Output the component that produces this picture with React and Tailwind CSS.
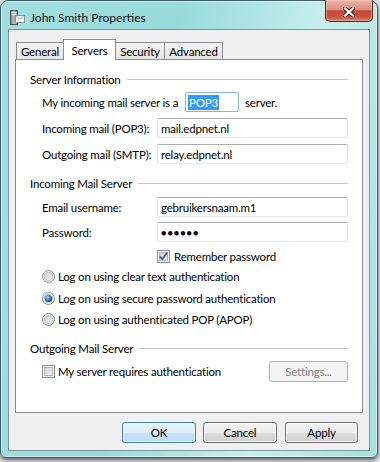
import React from "react";

const FONT = "font-['Segoe_UI','Lato','Liberation_Sans',sans-serif]";

function TitleIcon() {
  return (
    <svg width="16" height="17" viewBox="0 0 16 17">
      <defs>
        <linearGradient id="tw" x1="0" y1="0" x2="1" y2="0">
          <stop offset="0" stopColor="#7d868b" />
          <stop offset="0.5" stopColor="#b9c0c4" />
          <stop offset="1" stopColor="#6f787c" />
        </linearGradient>
      </defs>
      <rect x="1.5" y="1.5" width="7" height="14" fill="url(#tw)" stroke="#4f585c" />
      <rect x="2.5" y="3" width="5" height="1" fill="#e8eced" />
      <rect x="2.5" y="5" width="5" height="1" fill="#e8eced" />
      <rect x="6.5" y="6.5" width="9" height="7" fill="#fbfbfb" stroke="#8a9295" />
      <path d="M6.5 6.5 L11 10.2 L15.5 6.5" fill="none" stroke="#a0a7aa" />
    </svg>
  );
}

function CloseX() {
  return (
    <svg width="12" height="10" viewBox="0 0 12 10">
      <path d="M2 1.5 L10 8.5 M10 1.5 L2 8.5" stroke="#3a1a16" strokeWidth="4.2" strokeLinecap="square" />
      <path d="M2 1.5 L10 8.5 M10 1.5 L2 8.5" stroke="#ffffff" strokeWidth="2.2" strokeLinecap="square" />
    </svg>
  );
}

function Checkbox({ checked }) {
  return (
    <svg width="13" height="13" viewBox="0 0 13 13" className="shrink-0">
      <defs>
        <linearGradient id="cbg" x1="0" y1="0" x2="1" y2="1">
          <stop offset="0" stopColor="#c9cdd2" />
          <stop offset="1" stopColor="#f7f7f7" />
        </linearGradient>
      </defs>
      <rect x="0.5" y="0.5" width="12" height="12" fill="#f4f4f4" stroke="#8e8f8f" />
      <rect x="2.5" y="2.5" width="8" height="8" fill="url(#cbg)" stroke="#b1b5ba" />
      {checked && (
        <path d="M2.8 6.3 L5.2 9.2 L10.3 2.6" stroke="#3f5489" strokeWidth="1.7" fill="none" />
      )}
    </svg>
  );
}

function Radio({ checked }) {
  return (
    <svg width="13" height="13" viewBox="0 0 13 13" className="shrink-0">
      <defs>
        <linearGradient id="rgg" x1="0" y1="0" x2="1" y2="1">
          <stop offset="0" stopColor="#c6cacf" />
          <stop offset="1" stopColor="#f8f8f8" />
        </linearGradient>
        <radialGradient id="rbb" cx="0.4" cy="0.35" r="0.7">
          <stop offset="0" stopColor="#b3e2fb" />
          <stop offset="0.45" stopColor="#3a8ad0" />
          <stop offset="1" stopColor="#0f3f78" />
        </radialGradient>
      </defs>
      <circle cx="6.5" cy="6.5" r="6" fill="#f4f4f4" stroke="#8e8f8f" />
      <circle cx="6.5" cy="6.5" r="4.2" fill="url(#rgg)" stroke="#b4b8bc" strokeWidth="0.8" />
      {checked && <circle cx="6.5" cy="6.5" r="3.6" fill="url(#rbb)" />}
    </svg>
  );
}

function Field({ children }) {
  return (
    <div className="shrink-0 w-[191px] h-[20px] border border-[#abadb3] border-l-[#e2e3ea] border-r-[#dbdfe6] border-b-[#e3e9ef] rounded-[2px] bg-white flex items-center px-[3px] leading-[15px] whitespace-nowrap">
      {children}
    </div>
  );
}

function Header({ children, className }) {
  return (
    <div className={"h-[16px] flex items-center gap-[6px] " + className}>
      <span className="leading-[15px] whitespace-nowrap">{children}</span>
      <div className="flex-1 h-px bg-[#c2c6c9]" />
    </div>
  );
}

function LabeledField({ label, children, className }) {
  return (
    <div className={"h-[20px] flex items-center pl-[12px] " + className}>
      <span className="shrink-0 w-[115px] leading-[15px] whitespace-nowrap">{label}</span>
      <Field>{children}</Field>
    </div>
  );
}

function RadioRow({ checked, children, className }) {
  return (
    <div className={"h-[15px] flex items-center gap-[3px] pl-[12px] " + className}>
      <Radio checked={checked} />
      <span className="leading-[15px] whitespace-nowrap">{children}</span>
    </div>
  );
}

export default function App() {
  return (
    <div className={"w-[380px] h-[462px] bg-[#dfe6e8] text-[11.5px] tracking-[-0.2px] text-black " + FONT}>
      <div className="w-[378px] h-[458px] rounded-t-[8px] rounded-b-[6px] border border-[#3e5a63] bg-[linear-gradient(100deg,#a2dedf_0%,#98dadb_40%,#c6efee_72%,#a4dfe0_100%)] shadow-[inset_0_0_0_1px_rgba(255,255,255,0.5),0_2px_4px_rgba(0,0,0,0.6)] flex flex-col px-[7px] pb-[6px]">
        <div className="h-[29px] flex items-start">
          <div className="mt-[8px] ml-[1px]">
            <TitleIcon />
          </div>
          <span className="ml-[5px] mt-[9px] text-[12px] tracking-normal leading-[15px] text-[#111] whitespace-nowrap">John Smith Properties</span>
          <div className="ml-auto -mt-px mr-[-3px] w-[48px] h-[22px] rounded-b-[5px] border border-[#5a231b] border-t-0 bg-[linear-gradient(to_bottom,#eab4a8_0%,#dd907f_45%,#c64a33_52%,#c8513a_78%,#dc7d62_100%)] shadow-[inset_0_0_0_1px_rgba(255,210,200,0.45)] flex items-center justify-center pt-[2px]">
            <CloseX />
          </div>
        </div>

        <div className="flex-1 bg-[#f0f0f0] border border-[#7a979f] flex flex-col px-[6px] pt-[9px]">
          <div className="flex items-end pl-px">
            <div className="w-[48px] h-[17px] border border-b-0 border-[#898c95] bg-[linear-gradient(#f4f4f4,#e4e4e4)] flex items-center justify-center leading-[15px]">
              General
            </div>
            <div className="relative z-10 -ml-px -mb-px w-[53px] h-[21px] border border-b-0 border-[#898c95] bg-white flex items-center justify-center leading-[15px]">
              Servers
            </div>
            <div className="-ml-px w-[50px] h-[17px] border border-b-0 border-[#898c95] bg-[linear-gradient(#f4f4f4,#e4e4e4)] flex items-center justify-center leading-[15px]">
              Security
            </div>
            <div className="-ml-px w-[59px] h-[17px] border border-b-0 border-[#898c95] bg-[linear-gradient(#f4f4f4,#e4e4e4)] flex items-center justify-center leading-[15px]">
              Advanced
            </div>
          </div>

          <div className="h-[354px] bg-white border border-[#898c95] flex flex-col px-[14px]">
            <Header className="mt-[11px]">Server Information</Header>
            <div className="mt-[5px] h-[20px] flex items-center pl-[12px]">
              <span className="shrink-0 w-[143px] leading-[15px] whitespace-nowrap">My incoming mail server is a</span>
              <div className="shrink-0 w-[54px] h-[20px] border border-[#7eb4ea] rounded-[2px] bg-white flex items-center pl-[2px]">
                <span className="bg-[#3399ff] text-white h-[15px] leading-[15px] px-px">POP3</span>
              </div>
              <span className="ml-[6px] leading-[15px] whitespace-nowrap">server.</span>
            </div>
            <LabeledField className="mt-[6px]" label="Incoming mail (POP3):">mail.edpnet.nl</LabeledField>
            <LabeledField className="mt-[6px]" label="Outgoing mail (SMTP):">relay.edpnet.nl</LabeledField>

            <Header className="mt-[11px]">Incoming Mail Server</Header>
            <LabeledField className="mt-[6px]" label="Email username:">gebruikersnaam.m1</LabeledField>
            <LabeledField className="mt-[5px]" label="Password:">
              <span className="text-[9px] tracking-[1px] leading-[15px]">●●●●●●</span>
            </LabeledField>
            <div className="mt-[7px] h-[15px] flex items-center gap-[4px] pl-[127px]">
              <Checkbox checked />
              <span className="leading-[15px] whitespace-nowrap">Remember password</span>
            </div>
            <RadioRow className="mt-[5px]">Log on using clear text authentication</RadioRow>
            <RadioRow className="mt-[7px]" checked>Log on using secure password authentication</RadioRow>
            <RadioRow className="mt-[6px]">Log on using authenticated POP (APOP)</RadioRow>

            <Header className="mt-[13px]">Outgoing Mail Server</Header>
            <div className="mt-[5px] h-[21px] flex items-center pl-[12px]">
              <Checkbox />
              <span className="ml-[3px] leading-[15px] whitespace-nowrap">My server requires authentication</span>
              <div className="ml-auto shrink-0 w-[79px] h-[21px] rounded-[3px] border border-[#adb2b5] bg-[#f4f4f4] text-[#838383] flex items-center justify-center leading-[15px]">
                Settings...
              </div>
            </div>
          </div>

          <div className="mt-[9px] mb-[7px] h-[21px] flex justify-end pr-[5px]">
            <div className="w-[74px] h-[21px] rounded-[3px] border border-[#3c7fb1] bg-[linear-gradient(to_bottom,#eaf5fc_0%,#dcedf9_50%,#c8e4f6_51%,#bbdcf2_100%)] shadow-[inset_0_0_0_1px_rgba(230,250,255,0.9)] flex items-center justify-center leading-[15px]">
              OK
            </div>
            <div className="ml-[7px] w-[74px] h-[21px] rounded-[3px] border border-[#707070] bg-[linear-gradient(to_bottom,#f2f2f2_0%,#ebebeb_50%,#dddddd_51%,#cfcfcf_100%)] shadow-[inset_0_0_0_1px_rgba(255,255,255,0.8)] flex items-center justify-center leading-[15px]">
              Cancel
            </div>
            <div className="ml-[8px] w-[73px] h-[21px] rounded-[3px] border border-[#707070] bg-[linear-gradient(to_bottom,#f2f2f2_0%,#ebebeb_50%,#dddddd_51%,#cfcfcf_100%)] shadow-[inset_0_0_0_1px_rgba(255,255,255,0.8)] flex items-center justify-center leading-[15px]">
              Apply
            </div>
          </div>
        </div>
      </div>
    </div>
  );
}
